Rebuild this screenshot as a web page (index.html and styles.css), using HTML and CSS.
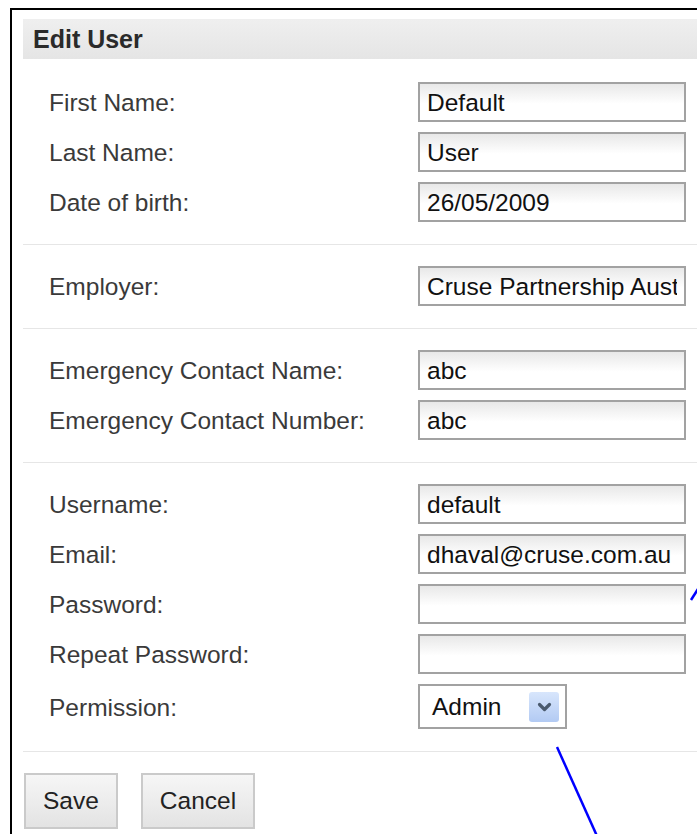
FILE: index.html
```html
<!DOCTYPE html>
<html lang="en">
<head>
<meta charset="utf-8">
<title>Edit User</title>
<link rel="stylesheet" href="styles.css">
</head>
<body>
<div class="frame">
  <form class="panel">
    <h2 class="panel-title">Edit User</h2>

    <section class="group first">
      <div class="row"><label class="lbl">First Name:</label><input class="field" type="text" value="Default"></div>
      <div class="row"><label class="lbl">Last Name:</label><input class="field" type="text" value="User"></div>
      <div class="row"><label class="lbl">Date of birth:</label><input class="field" type="text" value="26/05/2009"></div>
    </section>

    <section class="group">
      <div class="row"><label class="lbl">Employer:</label><input class="field" type="text" value="Cruse Partnership Australia"></div>
    </section>

    <section class="group">
      <div class="row"><label class="lbl">Emergency Contact Name:</label><input class="field" type="text" value="abc"></div>
      <div class="row"><label class="lbl">Emergency Contact Number:</label><input class="field" type="text" value="abc"></div>
    </section>

    <section class="group">
      <div class="row"><label class="lbl">Username:</label><input class="field" type="text" value="default"></div>
      <div class="row"><label class="lbl">Email:</label><input class="field" type="text" value="dhaval@cruse.com.au"></div>
      <div class="row"><label class="lbl">Password:</label><input class="field" type="password" value=""></div>
      <div class="row"><label class="lbl">Repeat Password:</label><input class="field" type="password" value=""></div>
      <div class="row tall">
        <label class="lbl">Permission:</label>
        <div class="select">
          <span class="select-value">Admin</span>
          <span class="select-arrow">
            <svg width="15" height="10" viewBox="0 0 15 10"><polyline points="2.5,2.5 7.5,7.5 12.5,2.5" fill="none" stroke="#4a5a6e" stroke-width="3.2" stroke-linecap="round" stroke-linejoin="round"/></svg>
          </span>
        </div>
      </div>
    </section>

    <div class="actions">
      <button type="button" class="btn">Save</button>
      <button type="button" class="btn">Cancel</button>
    </div>
  </form>
</div>

<!-- pen strokes drawn over the form -->
<svg class="marks" width="697" height="834" viewBox="0 0 697 834">
  <line x1="691" y1="600" x2="698" y2="589" stroke="#0000ff" stroke-width="2.5"/>
  <line x1="557" y1="747" x2="597" y2="836" stroke="#0000ff" stroke-width="2.5"/>
</svg>
</body>
</html>
```

FILE: styles.css
```css
html, body {
  margin: 0;
  height: 100%;
  overflow: hidden;
  background: #fff;
}

body {
  position: relative;
  font-family: "Liberation Sans", Arial, sans-serif;
}

.frame {
  box-sizing: border-box;
  height: 826px;
  margin: 8px 0 0 10px;
  border-top: 2px solid #000;
  border-left: 2px solid #000;
  padding: 9px 0 0 11px;
}

.panel {
  margin: 0;
}

.panel-title {
  margin: 0;
  height: 40px;
  line-height: 41px;
  padding-left: 10px;
  font-size: 25px;
  font-weight: bold;
  color: #2a2a2a;
  background: linear-gradient(#efefef, #e5e5e5);
}

.group {
  display: flex;
  flex-direction: column;
  gap: 10px;
  padding: 21px 0 22px 26px;
  border-bottom: 1px solid #e6e6e6;
}

.group.first {
  padding-top: 23px;
}

.row {
  display: flex;
  align-items: center;
  height: 40px;
}

.row.tall {
  height: 45px;
}

.lbl {
  width: 369px;
  flex: none;
  font-size: 24.5px;
  color: #3a3a3a;
  padding-top: 2px;
}

.field {
  box-sizing: border-box;
  width: 268px;
  height: 40px;
  margin: 0;
  padding: 1px 7px 0;
  border: 2px solid #a2a2a2;
  border-radius: 0;
  outline: none;
  font: 24.5px "Liberation Sans", Arial, sans-serif;
  color: #111;
  background: linear-gradient(#e8e8e8, #ffffff 55%);
}

.select {
  box-sizing: border-box;
  width: 149px;
  height: 45px;
  display: flex;
  align-items: center;
  justify-content: space-between;
  padding: 0 6px 0 12px;
  border: 2px solid #a2a2a2;
  background: #fff;
  font-size: 24.5px;
  color: #111;
}

.select-arrow {
  width: 30px;
  height: 30px;
  display: flex;
  align-items: center;
  justify-content: center;
  border-radius: 3px;
  background: linear-gradient(#d8e6fc, #b2caf3);
}

.actions {
  display: flex;
  gap: 23px;
  padding: 21px 0 0 1px;
}

.btn {
  height: 56px;
  margin: 0;
  padding: 0 17px;
  border: 2px solid #cacaca;
  border-radius: 0;
  background: linear-gradient(#f6f6f6, #e3e3e3);
  font: 24.5px "Liberation Sans", Arial, sans-serif;
  color: #222;
}

.marks {
  position: absolute;
  top: 0;
  left: 0;
  pointer-events: none;
}
```
